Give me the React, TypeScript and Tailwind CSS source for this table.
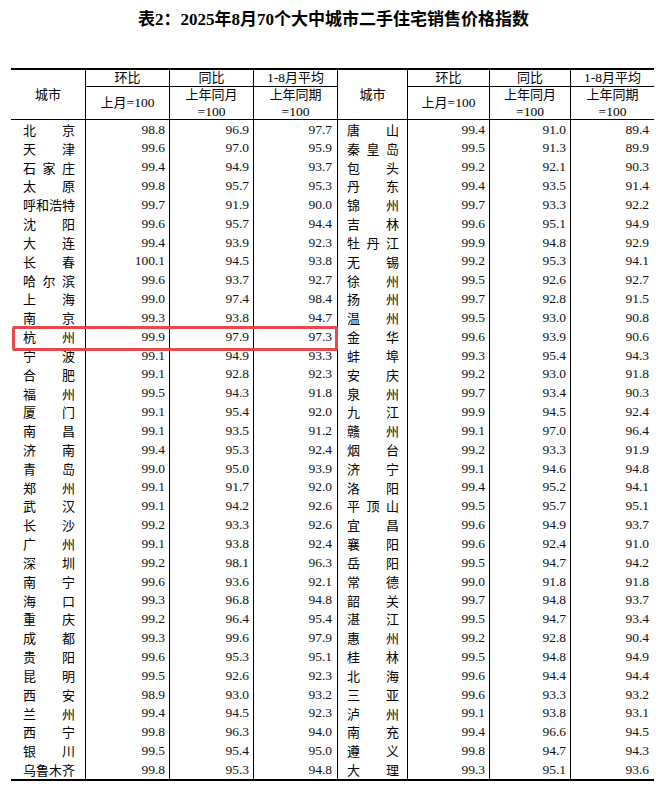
import React from "react";

type Row = [string, string, string, string];

const left: Row[] = [
  ["北京", "98.8", "96.9", "97.7"],
  ["天津", "99.6", "97.0", "95.9"],
  ["石家庄", "99.4", "94.9", "93.7"],
  ["太原", "99.8", "95.7", "95.3"],
  ["呼和浩特", "99.7", "91.9", "90.0"],
  ["沈阳", "99.6", "95.7", "94.4"],
  ["大连", "99.4", "93.9", "92.3"],
  ["长春", "100.1", "94.5", "93.8"],
  ["哈尔滨", "99.6", "93.7", "92.7"],
  ["上海", "99.0", "97.4", "98.4"],
  ["南京", "99.3", "93.8", "94.7"],
  ["杭州", "99.9", "97.9", "97.3"],
  ["宁波", "99.1", "94.9", "93.3"],
  ["合肥", "99.1", "92.8", "92.3"],
  ["福州", "99.5", "94.3", "91.8"],
  ["厦门", "99.1", "95.4", "92.0"],
  ["南昌", "99.1", "93.5", "91.2"],
  ["济南", "99.4", "95.3", "92.4"],
  ["青岛", "99.0", "95.0", "93.9"],
  ["郑州", "99.1", "91.7", "92.0"],
  ["武汉", "99.1", "94.2", "92.6"],
  ["长沙", "99.2", "93.3", "92.6"],
  ["广州", "99.1", "93.8", "92.4"],
  ["深圳", "99.2", "98.1", "96.3"],
  ["南宁", "99.6", "93.6", "92.1"],
  ["海口", "99.3", "96.8", "94.8"],
  ["重庆", "99.2", "96.4", "95.4"],
  ["成都", "99.3", "99.6", "97.9"],
  ["贵阳", "99.6", "95.3", "95.1"],
  ["昆明", "99.5", "92.6", "92.3"],
  ["西安", "98.9", "93.0", "93.2"],
  ["兰州", "99.4", "94.5", "92.3"],
  ["西宁", "99.8", "96.3", "94.0"],
  ["银川", "99.5", "95.4", "95.0"],
  ["乌鲁木齐", "99.8", "95.3", "94.8"],
];

const right: Row[] = [
  ["唐山", "99.4", "91.0", "89.4"],
  ["秦皇岛", "99.5", "91.3", "89.9"],
  ["包头", "99.2", "92.1", "90.3"],
  ["丹东", "99.4", "93.5", "91.4"],
  ["锦州", "99.7", "93.3", "92.2"],
  ["吉林", "99.6", "95.1", "94.9"],
  ["牡丹江", "99.9", "94.8", "92.9"],
  ["无锡", "99.2", "95.3", "94.1"],
  ["徐州", "99.5", "92.6", "92.7"],
  ["扬州", "99.7", "92.8", "91.5"],
  ["温州", "99.5", "93.0", "90.8"],
  ["金华", "99.6", "93.9", "90.6"],
  ["蚌埠", "99.3", "95.4", "94.3"],
  ["安庆", "99.2", "93.0", "91.8"],
  ["泉州", "99.7", "93.4", "90.3"],
  ["九江", "99.9", "94.5", "92.4"],
  ["赣州", "99.1", "97.0", "96.4"],
  ["烟台", "99.2", "93.3", "91.9"],
  ["济宁", "99.1", "94.6", "94.8"],
  ["洛阳", "99.4", "95.2", "94.1"],
  ["平顶山", "99.5", "95.7", "95.1"],
  ["宜昌", "99.6", "94.9", "93.7"],
  ["襄阳", "99.6", "92.4", "91.0"],
  ["岳阳", "99.5", "94.7", "94.2"],
  ["常德", "99.0", "91.8", "91.8"],
  ["韶关", "99.7", "94.8", "93.7"],
  ["湛江", "99.5", "94.7", "93.4"],
  ["惠州", "99.2", "92.8", "90.4"],
  ["桂林", "99.5", "94.8", "94.9"],
  ["北海", "99.6", "94.4", "94.4"],
  ["三亚", "99.6", "93.3", "93.2"],
  ["泸州", "99.1", "93.8", "93.1"],
  ["南充", "99.4", "96.6", "94.5"],
  ["遵义", "99.8", "94.7", "94.3"],
  ["大理", "99.3", "95.1", "93.6"],
];

const serif = "font-['Liberation_Serif','Noto_Sans_CJK_SC',serif]";
const cjk = "font-['Noto_Sans_CJK_SC','Liberation_Sans',sans-serif]";

function City({ name, pl }: { name: string; pl: string }) {
  return (
    <div className={`flex h-[18.83px] items-center border-r border-black ${pl}`}>
      <div className={`flex w-[52px] justify-between text-[13px] leading-none text-black ${cjk}`}>
        {name.split("").map((c, i) => (
          <span key={i}>{c}</span>
        ))}
      </div>
    </div>
  );
}

function Num({ v, last, pr }: { v: string; last?: boolean; pr: string }) {
  return (
    <div
      className={`flex h-[18.83px] items-center justify-end text-[13.5px] leading-none text-[#111] ${serif} ${pr} ${
        last ? "" : "border-r border-black"
      }`}
    >
      {v}
    </div>
  );
}

function HeadGroup({ last }: { last?: boolean }) {
  const h1 = `flex h-[17px] items-center justify-center border-b border-black pb-[1px] text-[13px] leading-none text-black ${serif}`;
  const h2 = `flex h-[32px] flex-col items-center justify-center text-[13px] text-black ${serif}`;
  return (
    <>
      <div className="flex flex-col border-r border-black">
        <div className={h1}>环比</div>
        <div className={h2}>
          <span className="leading-[16px]">
            上月<span className="text-[13.5px]">=100</span>
          </span>
        </div>
      </div>
      <div className="flex flex-col border-r border-black">
        <div className={h1}>同比</div>
        <div className={h2}>
          <span className="leading-[16px]">上年同月</span>
          <span className="mt-[1px] text-[13.5px] leading-[16px]">=100</span>
        </div>
      </div>
      <div className={`flex flex-col ${last ? "" : "border-r border-black"}`}>
        <div className={h1}>
          <span className="text-[13.5px]">1-8</span>月平均
        </div>
        <div className={h2}>
          <span className="leading-[16px]">上年同期</span>
          <span className="mt-[1px] text-[13.5px] leading-[16px]">=100</span>
        </div>
      </div>
    </>
  );
}

export default function App() {
  const cols = "grid grid-cols-[75px_84px_84px_84px_70px_82px_81px_83px]";
  return (
    <div className="h-[794px] w-[667px] bg-white">
      <div className="flex h-[68px] justify-center pt-[8px]">
        <h1 className={`text-[17px] font-bold leading-[24px] text-black ${serif}`}>
          表2：2025年8月70个大中城市二手住宅销售价格指数
        </h1>
      </div>
      <div className="relative ml-[11px] w-[643px]">
        <div className={`${cols} border-t-2 border-b border-black`}>
          <div className={`flex items-center justify-center border-r border-black text-[13px] leading-none text-black ${serif}`}>
            城市
          </div>
          <HeadGroup />
          <div className={`flex items-center justify-center border-r border-black text-[13px] leading-none text-black ${serif}`}>
            城市
          </div>
          <HeadGroup last />
        </div>
        <div className={`${cols} border-b-2 border-black`}>
          {left.map((l, i) => {
            const r = right[i];
            return (
              <React.Fragment key={i}>
                <City name={l[0]} pl="pl-[12px]" />
                <Num v={l[1]} pr="pr-[4px]" />
                <Num v={l[2]} pr="pr-[4px]" />
                <Num v={l[3]} pr="pr-[5px]" />
                <City name={r[0]} pl="pl-[9px]" />
                <Num v={r[1]} pr="pr-[4px]" />
                <Num v={r[2]} pr="pr-[4px]" />
                <Num v={r[3]} last pr="pr-[5px]" />
              </React.Fragment>
            );
          })}
        </div>
        <div className="pointer-events-none absolute left-[1px] top-[258px] h-[25px] w-[326px] rounded-[2px] border-[3px] border-[#e8494f]" />
      </div>
    </div>
  );
}
